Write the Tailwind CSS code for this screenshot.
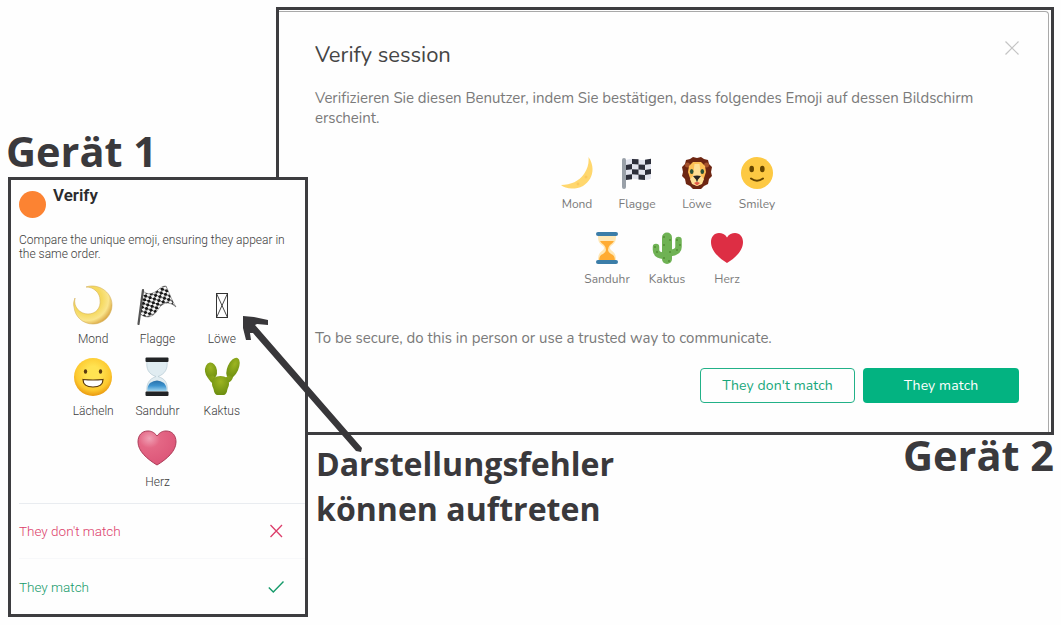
<!DOCTYPE html>
<html lang="de">
<head>
<meta charset="utf-8">
<title>Verify session</title>
<script src="https://cdn.jsdelivr.net/npm/@tailwindcss/browser@4"></script>
</head>
<body class="bg-[#fefefe]">
<main class="relative w-[1061px] h-[625px] overflow-hidden font-['Open_Sans',sans-serif] text-[#3a393c]">

  <!-- Device 2 -->
  <section class="absolute left-[276px] top-[7px] w-[778px] h-[428px] border-3 border-[#3d3d40] bg-[#fefefe] pt-px pr-[2px] font-['Nunito','Lato',sans-serif]">
    <div class="h-full border-t border-r border-[#a9a9a9] rounded-tr-sm pl-9 pr-[29px] flex flex-col">
      <header class="flex justify-between pt-[27px] h-[76px]">
        <h1 class="text-[22px] leading-8 tracking-[-0.01px] text-[#454545]">Verify session</h1>
        <svg class="w-4 h-4 mt-px -mr-px" viewBox="0 0 16 16" fill="none" stroke="#c4c4c4" stroke-width="1.2"><path d="M1.500 1.500l13 13M14.500 1.500l-13 13"/></svg>
      </header>
      <p class="text-[15px] leading-5 tracking-[-0.03px] text-[#7a7a7a] whitespace-nowrap">Verifizieren Sie diesen Benutzer, indem Sie bestätigen, dass folgendes Emoji auf dessen Bildschirm<br>erscheint.</p>
      <div class="mt-[29px] flex flex-col items-center gap-[11px] text-[12px] text-[#7a7a7a] w-[704px]">
        <div class="flex">
          <figure class="w-15 h-16 flex flex-col items-center"><svg class="w-8 h-8" viewBox="0 0 32 32"><path d="M27.500 0C34 9 33 22 22 29C14 33 4 32 0 28C10 28 18 24 23 17C27 11 28 6 27.500 0Z" fill="#ffd76e"/><g fill="#fbc95c"><circle cx="25" cy="20" r="1.500"/><circle cx="17" cy="27" r="1.400"/></g></svg><figcaption class="mt-[7px] leading-4">Mond</figcaption></figure>
          <figure class="w-15 h-16 flex flex-col items-center"><svg class="w-8 h-8" viewBox="0 0 32 32"><path d="M5 3q6-2 12.500-.5t12.500-.8v20q-6 2-12.500.6T5 23z" fill="#e2e4ee"/><g fill="#2c2e3a"><path d="M11 2l6.500.3v5.200L11 7zM24 2.800l6-1v5.200l-6 .8zM5 8l6-1v5.200L5 13zM17.500 7.500l6.500.3V13l-6.500-.5zM11 12.200l6.500.3v5.200L11 17.300zM24 13l6-1v5l-6 1zM5 18l6-.8v5L5 23zM17.500 17.600l6.500.4v5l-6.500-.6z"/></g><rect x="1" y="1" width="4" height="31" rx="2" fill="#99a0a8"/></svg><figcaption class="mt-[7px] leading-4">Flagge</figcaption></figure>
          <figure class="w-15 h-16 flex flex-col items-center"><svg class="w-8 h-8" viewBox="0 0 32 32"><path d="M16 1l4-1 3 2 4 1 1 4 3 3-1 5 1 4-3 3-1 5-4 2-3 3H12l-3-3-4-2-1-5-3-3 1-4-1-5 3-3 1-4 4-1 3-2z" fill="#6d2612"/><circle cx="6.500" cy="8" r="2.500" fill="#a5522c"/><circle cx="25.500" cy="8" r="2.500" fill="#a5522c"/><path d="M16 5l4 0 4 4 1 6-2 6-3 6-4 2-4-2-3-6-2-6 1-6 4-4z" fill="#fdbf55"/><path d="M13.500 7h5l1.500 12 3 3-2 5-5 2-5-2-2-5 3-3z" fill="#ffdf95"/><ellipse cx="10.700" cy="14.500" rx="1.800" ry="2.500" fill="#2a5136"/><ellipse cx="21.300" cy="14.500" rx="1.800" ry="2.500" fill="#2a5136"/><path d="M12 19q4-1 8 0l-3.300 4v1.500h-1.400V23z" fill="#292522"/><path d="M13 26q3-2 6 0l-3 2.500z" fill="#e65a48"/></svg><figcaption class="mt-[7px] leading-4">Löwe</figcaption></figure>
          <figure class="w-15 h-16 flex flex-col items-center"><svg class="w-8 h-8" viewBox="0 0 32 32"><circle cx="16" cy="16" r="16" fill="#fdc943"/><g fill="#664500"><ellipse cx="10.700" cy="12" rx="2.300" ry="3.200"/><ellipse cx="21.300" cy="12" rx="2.300" ry="3.200"/></g><path d="M10 21.500q6 4.500 12 0" fill="none" stroke="#664500" stroke-width="2" stroke-linecap="round"/></svg><figcaption class="mt-[7px] leading-4">Smiley</figcaption></figure>
        </div>
        <div class="flex">
          <figure class="w-15 h-16 flex flex-col items-center"><svg class="w-8 h-8" viewBox="0 0 32 32"><path d="M7 3h18c0 7-1 8-5 11q-2 2 0 4c4 3 5 5 5 11H7c0-6 1-8 5-11q2-2 0-4C8 11 7 10 7 3z" fill="#ffe8b6"/><path d="M9 9h14q-1 2-4 4-2 2-2 5 0 2 3 4 4 1 4 7H8q0-6 4-7 3-2 3-4 0-3-2-5-3-2-4-4z" fill="#ffac33"/><rect x="5" y="0" width="22" height="4" rx="2" fill="#3b7da8"/><rect x="5" y="28" width="22" height="4" rx="2" fill="#3b7da8"/></svg><figcaption class="mt-[7px] leading-4">Sanduhr</figcaption></figure>
          <figure class="w-15 h-16 flex flex-col items-center"><svg class="w-8 h-8" viewBox="0 0 32 32"><g fill="none" stroke="#6fb254" stroke-linecap="round" stroke-linejoin="round"><path d="M16 5.500V27" stroke-width="10"/><path d="M5 15v3q0 5 8 6M27.500 8v7q0 5-8 6" stroke-width="6.500"/></g><g fill="#3e721d"><circle cx="13" cy="5" r=".8"/><circle cx="19" cy="8" r=".8"/><circle cx="13" cy="13" r=".8"/><circle cx="19" cy="20" r=".8"/><circle cx="4" cy="15" r=".8"/><circle cx="6" cy="20" r=".8"/><circle cx="26" cy="8" r=".8"/><circle cx="29" cy="13" r=".8"/><circle cx="26" cy="18" r=".8"/><circle cx="13" cy="26" r=".8"/><circle cx="18" cy="29" r=".8"/></g></svg><figcaption class="mt-[7px] leading-4">Kaktus</figcaption></figure>
          <figure class="w-15 h-16 flex flex-col items-center"><svg class="w-8 h-8" viewBox="0 0 32 32"><path d="M16 5.500C18 2 21 1 24 1c5 0 8 4 8 9 0 9-8 16-16 21C8 26 0 19 0 10 0 5 3 1 8 1c3 0 6 1 8 4.500z" fill="#dd2e44"/></svg><figcaption class="mt-[7px] leading-4">Herz</figcaption></figure>
        </div>
      </div>
      <p class="mt-[32px] text-[15px] leading-5 tracking-[-0.015px] text-[#7a7a7a] whitespace-nowrap">To be secure, do this in person or use a trusted way to communicate.</p>
      <div class="mt-5 flex justify-end gap-2 text-[14px] tracking-[0.1px]">
        <button class="w-[155px] h-[35px] rounded border border-[#22b188] text-[#16a67a]">They don't match</button>
        <button class="w-[156px] h-[35px] rounded bg-[#03b381] text-white">They match</button>
      </div>
    </div>
  </section>

  <!-- Device 1 -->
  <section class="absolute left-2 top-[177px] w-[300px] h-[440px] border-3 border-[#3d3d40] bg-[#fefefe] font-['Roboto',sans-serif] font-[340] text-[#3c3c3c]">
    <header class="flex gap-[7px] pl-2 pt-[5px] h-[53px]">
      <span class="w-[27px] h-[27px] mt-[6px] rounded-full bg-[#fc8332]"></span>
      <h2 class="text-[17px] leading-[21px] font-semibold text-[#2b2b2d]">Verify</h2>
    </header>
    <p class="pl-2 text-[12px] leading-[14px] whitespace-nowrap">Compare the unique emoji, ensuring they appear in<br>the same order.</p>
    <div class="mt-[24px] ml-[50px] w-[193px] grid grid-cols-3 text-[12px] gap-y-[10.5px]">
      <figure class="h-[61px] flex flex-col items-center"><svg class="w-10 h-10 shrink-0" viewBox="0 0 40 40"><defs><radialGradient id="mo" cx=".35" cy=".35" r=".7"><stop offset=".55" stop-color="#f5d95f"/><stop offset=".8" stop-color="#fae58c"/><stop offset="1" stop-color="#dba945"/></radialGradient></defs><path d="M13 2C24-2 39 6 39 20 39 31 30 39 20 39 10 39 2 32 1 22 0 18 1 16 2 13 0 22 7 29 15 29 23 29 28 23 27 15 27 8 21 2 13 2Z" fill="url(#mo)" stroke="#d5b25c" stroke-width=".6"/></svg><figcaption class="mt-[7px] leading-[14px]">Mond</figcaption></figure>
      <figure class="h-[61px] flex flex-col items-center"><svg class="w-10 h-10 shrink-0" viewBox="0 0 40 40"><defs><pattern id="ch" width="6" height="6" patternUnits="userSpaceOnUse" patternTransform="rotate(-22) skewX(10)"><rect width="6" height="6" fill="#f4f4f4"/><path d="M0 0h3v3H0zM3 3H6V6H3z" fill="#171717"/></pattern></defs><path d="M6 6q5 5 12 1c5-3 6-6 11-6 3 6 6 15 10 21q-8-7-14-2c-5 4-6 11-14 12-4 0-6-2-8-3z" fill="url(#ch)" stroke="#666" stroke-width=".5"/><path d="M6 5L1.500 39" stroke="#555" stroke-width="2.200" stroke-linecap="round"/></svg><figcaption class="mt-[7px] leading-[14px]">Flagge</figcaption></figure>
      <figure class="h-[61px] flex flex-col items-center"><svg class="w-10 h-10 shrink-0" viewBox="0 0 40 40" fill="none" stroke="#333"><rect x="14.500" y="8.500" width="11" height="24"/><path d="M14.500 8.500l11 24M25.500 8.500l-11 24" stroke-width=".9"/></svg><figcaption class="mt-[7px] leading-[14px]">Löwe</figcaption></figure>
      <figure class="h-[61px] flex flex-col items-center"><svg class="w-10 h-10 shrink-0" viewBox="0 0 40 40"><defs><radialGradient id="sm" cx=".5" cy=".4" r=".6"><stop offset=".3" stop-color="#ffe352"/><stop offset=".75" stop-color="#fdc92f"/><stop offset="1" stop-color="#e9980f"/></radialGradient></defs><circle cx="20" cy="20" r="19" fill="url(#sm)"/><ellipse cx="12.500" cy="14.500" rx="1.700" ry="2.200" fill="#5a3a10"/><ellipse cx="27.500" cy="14.500" rx="1.700" ry="2.200" fill="#5a3a10"/><path d="M10 22.500q10 1 20 0 0 7.500-10 7.500t-10-7.500z" fill="#fff" stroke="#5a3a10" stroke-width="1.200"/></svg><figcaption class="mt-[7px] leading-[14px]">Lächeln</figcaption></figure>
      <figure class="h-[61px] flex flex-col items-center"><svg class="w-10 h-10 shrink-0" viewBox="0 0 40 40"><defs><linearGradient id="bl" x1="0" y1="0" x2="0" y2="1"><stop offset="0" stop-color="#2a70a8"/><stop offset=".5" stop-color="#3c93cf"/><stop offset="1" stop-color="#9fd4ee"/></linearGradient></defs><path d="M10 4h20c1 8-2 13-9 15.500C29 22 31 27 30 35H10c-1-8 2-13 9-15.500C11 17 9 11 10 4z" fill="#e0ecf1" stroke="#b5c8d2" stroke-width=".7"/><path d="M13 26q7-5 14 0 3 3 2.500 8h-19q-.5-5 2.500-8z" fill="url(#bl)"/><rect x="8.500" y=".5" width="23" height="4.500" rx="1" fill="#222426"/><rect x="8.500" y="34.500" width="23" height="4.500" rx="1" fill="#222426"/></svg><figcaption class="mt-[7px] leading-[14px]">Sanduhr</figcaption></figure>
      <figure class="h-[61px] flex flex-col items-center"><svg class="w-10 h-10 shrink-0" viewBox="0 0 40 40"><defs><radialGradient id="ca" cx=".5" cy=".3" r=".7"><stop offset="0" stop-color="#9db522"/><stop offset="1" stop-color="#6c8e10"/></radialGradient></defs><g fill="url(#ca)"><ellipse cx="31" cy="11" rx="5.500" ry="11" transform="rotate(24 31 11)"/><ellipse cx="9" cy="14" rx="6" ry="8.500" transform="rotate(-8 9 14)"/><path d="M5 19q3 7 8 8l12-1q5-1 6-6l-4-2-5 4h-8l-3-4z"/><path d="M11.500 21q7-4 14 0 3 6 0 11-1 6-4 6h-6q-3 0-4-6-3-5 0-11z"/></g></svg><figcaption class="mt-[7px] leading-[14px]">Kaktus</figcaption></figure>
      <figure class="h-[61px] col-start-2 flex flex-col items-center"><svg class="w-10 h-10 shrink-0" viewBox="0 0 40 40"><defs><radialGradient id="he" cx=".3" cy=".22" r=".8"><stop offset="0" stop-color="#f0a0b4"/><stop offset=".35" stop-color="#e46785"/><stop offset="1" stop-color="#dc5578"/></radialGradient></defs><path d="M20 8C23 4 26 3 29 3c6 0 10 4 10 11 0 9-9 17-19 23C10 31 1 23 1 14 1 7 5 3 11 3c3 0 6 1 9 5z" fill="url(#he)" stroke="#ac3d59" stroke-width="1"/></svg><figcaption class="mt-[7px] leading-[14px]">Herz</figcaption></figure>
    </div>
    <div class="mt-[14px] ml-2 border-t border-[#e9ecf0] text-[13.5px]">
      <div class="h-[55px] flex items-center justify-between pr-[21px] text-[#dc3d6a] border-b border-[#f7f8fa]"><span>They don't match</span><svg class="w-4 h-4" viewBox="0 0 16 16" fill="none" stroke="currentColor" stroke-width="1.300"><path d="M2.500 2l11.500 12M14 2L2.500 14"/></svg></div>
      <div class="h-[56px] flex items-center justify-between pr-[21px] text-[#159a6a]"><span>They match</span><svg class="w-4 h-4" viewBox="0 0 16 16" fill="none" stroke="currentColor" stroke-width="1.400"><path d="M.8 8.500l4.500 4.500L15.500 2.500"/></svg></div>
    </div>
  </section>

  <!-- Annotations -->
  <h2 class="absolute left-[6px] top-[123px] text-[41.5px] leading-[56px] font-bold whitespace-nowrap">Gerät 1</h2>
  <h2 class="absolute left-[903px] top-[427px] text-[41.5px] leading-[56px] font-bold whitespace-nowrap">Gerät 2</h2>
  <p class="absolute left-[316px] top-[441px] text-[32.100px] leading-[45px] font-bold whitespace-nowrap">Darstellungsfehler<br>können auftreten</p>
  <svg class="absolute left-[240px] top-[312px] w-[126px] h-[144px]" viewBox="0 0 126 144"><path d="M3 4l11 1 14 3v5l-11-1-2 1L122 136l-1 4-5-1L13 21l-3 0 1 7-5 0L3 16z" fill="#38373a"/></svg>
</main>
</body>
</html>
